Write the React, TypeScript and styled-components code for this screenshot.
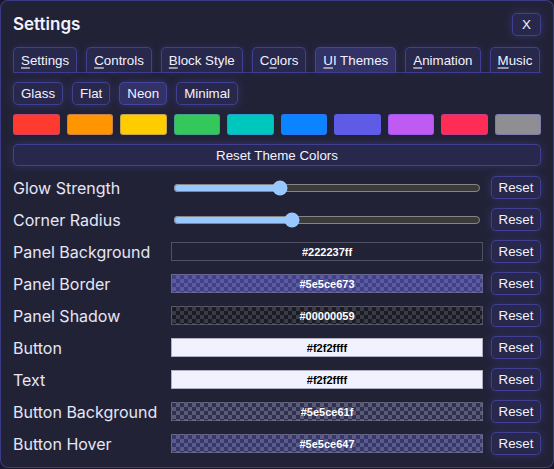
import styled, { createGlobalStyle } from "styled-components";

const GlobalStyle = createGlobalStyle`
  html, body {
    margin: 0;
    padding: 0;
    background-color: #1b1b2b;
  }
`;

const accent = "94, 92, 230";

const Panel = styled.main`
  box-sizing: border-box;
  width: 554px;
  height: 468px;
  padding: 12px;
  display: flex;
  flex-direction: column;
  border: 1px solid rgba(${accent}, 0.45);
  border-radius: 8px;
  background-color: #222237;
  box-shadow: 0 0 16px rgba(0, 0, 0, 0.35);
  font-family: Inter, "Noto Sans", sans-serif;
  color: #f2f2ff;
`;

const Header = styled.header`
  display: flex;
  align-items: center;
  justify-content: space-between;
  height: 23px;
  margin-bottom: 11px;
`;

const Title = styled.h2`
  margin: 0;
  font-size: 17px;
  font-weight: 600;
  line-height: 23px;
`;

const Button = styled.button<{ $active?: boolean }>`
  box-sizing: border-box;
  height: 23px;
  padding: 0 7px;
  font-family: "Liberation Sans", Arial, sans-serif;
  font-size: 13.333px;
  color: #f2f2ff;
  background-color: ${(p) => (p.$active ? `rgba(${accent}, 0.28)` : `rgba(${accent}, 0.12)`)};
  border: 1px solid rgba(${accent}, 0.45);
  border-radius: 5px;
  box-shadow: 0 0 8px rgba(${accent}, 0.3);
  cursor: pointer;
  white-space: nowrap;
`;

const CloseButton = styled(Button)`
  width: 29px;
  padding: 0;
`;

const TabBar = styled.nav`
  display: flex;
  gap: 9px;
  border-bottom: 1px solid rgba(${accent}, 0.45);
  margin-bottom: 9px;
`;

const Tab = styled(Button)`
  height: 25px;
  border-bottom: none;
  border-radius: 5px 5px 0 0;
  box-shadow: 0 0 6px rgba(${accent}, 0.2);
`;

const Key = styled.span`
  text-decoration: underline;
  text-decoration-color: rgba(242, 242, 255, 0.55);
  text-decoration-thickness: 2px;
  text-underline-offset: 2px;
`;

const StyleRow = styled.div`
  display: flex;
  gap: 9px;
  margin-bottom: 9px;
`;

const SwatchGrid = styled.div`
  display: grid;
  grid-template-columns: repeat(10, 1fr);
  gap: 7px;
  height: 21px;
  margin-bottom: 9px;
`;

const Swatch = styled.button<{ $color: string }>`
  box-sizing: border-box;
  height: 100%;
  padding: 0;
  border: 1px solid rgba(${accent}, 0.35);
  border-radius: 3px;
  background-color: ${(p) => p.$color};
  cursor: pointer;
`;

const WideButton = styled(Button)`
  width: 100%;
  height: 22px;
  margin-bottom: 10px;
`;

const SettingsList = styled.section`
  display: flex;
  flex-direction: column;
  gap: 9px;
`;

const Row = styled.div`
  display: flex;
  align-items: center;
  height: 23px;
`;

const Label = styled.label`
  flex: none;
  width: 158px;
  font-size: 16px;
  color: #e6e6f5;
  white-space: nowrap;
`;

const Control = styled.div`
  flex: 1;
  display: flex;
  align-items: center;
`;

const Slider = styled.input`
  width: 100%;
  margin: 2px;
  color-scheme: dark;
  accent-color: #99c8ff;
`;

const checker = `
  linear-gradient(45deg, #5a5a6a 25%, transparent 25%),
  linear-gradient(-45deg, #5a5a6a 25%, transparent 25%),
  linear-gradient(45deg, transparent 75%, #5a5a6a 75%),
  linear-gradient(-45deg, transparent 75%, #5a5a6a 75%)
`;

const ColorField = styled.div<{ $value: string }>`
  box-sizing: border-box;
  width: 100%;
  height: 19px;
  display: flex;
  align-items: center;
  justify-content: center;
  border: 1px solid rgba(120, 120, 140, 0.55);
  background-color: #2a2a3a;
  background-image: linear-gradient(${(p) => p.$value}, ${(p) => p.$value}), ${checker};
  background-size: 100% 100%, 8px 8px, 8px 8px, 8px 8px, 8px 8px;
  background-position: 0 0, 0 0, 0 4px, 4px -4px, -4px 0;
`;

const HexText = styled.span<{ $dark: boolean }>`
  font-family: "Liberation Sans", Arial, sans-serif;
  font-size: 11px;
  font-weight: 700;
  color: ${(p) => (p.$dark ? "#000000" : "#ffffff")};
`;

const ResetButton = styled(Button)`
  flex: none;
  width: 50px;
  margin-left: 8px;
  padding: 0;
`;

const tabs = [
  { pre: "", key: "S", post: "ettings" },
  { pre: "", key: "C", post: "ontrols" },
  { pre: "", key: "B", post: "lock Style" },
  { pre: "C", key: "o", post: "lors" },
  { pre: "", key: "U", post: "I Themes", active: true },
  { pre: "", key: "A", post: "nimation" },
  { pre: "", key: "M", post: "usic" },
];

const styles = ["Glass", "Flat", "Neon", "Minimal"];

const swatches = [
  "#ff3b30",
  "#ff9500",
  "#ffcc00",
  "#34c759",
  "#00c7be",
  "#0a84ff",
  "#5e5ce6",
  "#bf5af2",
  "#ff2d55",
  "#8e8e93",
];

const sliders = [
  { label: "Glow Strength", value: 34 },
  { label: "Corner Radius", value: 38 },
];

const colors = [
  { label: "Panel Background", value: "#222237ff" },
  { label: "Panel Border", value: "#5e5ce673" },
  { label: "Panel Shadow", value: "#00000059" },
  { label: "Button", value: "#f2f2ffff" },
  { label: "Text", value: "#f2f2ffff" },
  { label: "Button Background", value: "#5e5ce61f" },
  { label: "Button Hover", value: "#5e5ce647" },
];

const toRgba = (hex: string) => {
  const n = (i: number) => parseInt(hex.slice(i, i + 2), 16);
  return `rgba(${n(1)}, ${n(3)}, ${n(5)}, ${(n(7) / 255).toFixed(3)})`;
};

const isLight = (hex: string) => {
  const n = (i: number) => parseInt(hex.slice(i, i + 2), 16);
  const a = n(7) / 255;
  const lum = (0.299 * n(1) + 0.587 * n(3) + 0.114 * n(5)) * a;
  return lum > 140;
};

const App = () => {
  return (
    <>
      <GlobalStyle />
      <Panel>
        <Header>
          <Title>Settings</Title>
          <CloseButton>X</CloseButton>
        </Header>
        <TabBar>
          {tabs.map((t) => (
            <Tab key={t.key + t.post} $active={t.active}>
              {t.pre}
              <Key>{t.key}</Key>
              {t.post}
            </Tab>
          ))}
        </TabBar>
        <StyleRow>
          {styles.map((s) => (
            <Button key={s} $active={s === "Neon"}>
              {s}
            </Button>
          ))}
        </StyleRow>
        <SwatchGrid>
          {swatches.map((c) => (
            <Swatch key={c} $color={c} aria-label={c} />
          ))}
        </SwatchGrid>
        <WideButton>Reset Theme Colors</WideButton>
        <SettingsList>
          {sliders.map((s) => (
            <Row key={s.label}>
              <Label>{s.label}</Label>
              <Control>
                <Slider type="range" min={0} max={100} defaultValue={s.value} />
              </Control>
              <ResetButton>Reset</ResetButton>
            </Row>
          ))}
          {colors.map((c) => (
            <Row key={c.label}>
              <Label>{c.label}</Label>
              <Control>
                <ColorField $value={toRgba(c.value)}>
                  <HexText $dark={isLight(c.value)}>{c.value}</HexText>
                </ColorField>
              </Control>
              <ResetButton>Reset</ResetButton>
            </Row>
          ))}
        </SettingsList>
      </Panel>
    </>
  );
};

export default App;
